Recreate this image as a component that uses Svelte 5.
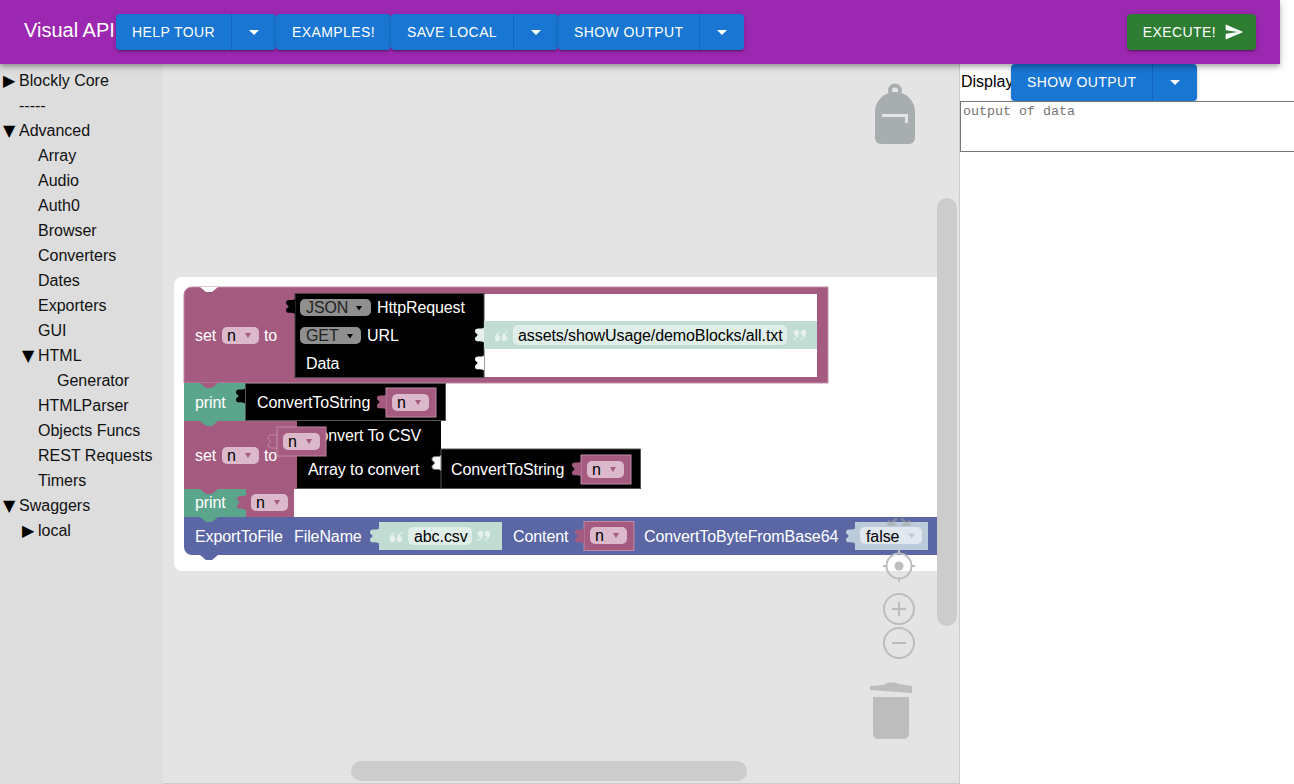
<script>
  const tree = [
    { label: 'Blockly Core', arrow: '▶', depth: 0 },
    { label: '-----', depth: 0 },
    { label: 'Advanced', arrow: '▼', depth: 0 },
    { label: 'Array', depth: 1 },
    { label: 'Audio', depth: 1 },
    { label: 'Auth0', depth: 1 },
    { label: 'Browser', depth: 1 },
    { label: 'Converters', depth: 1 },
    { label: 'Dates', depth: 1 },
    { label: 'Exporters', depth: 1 },
    { label: 'GUI', depth: 1 },
    { label: 'HTML', arrow: '▼', depth: 1 },
    { label: 'Generator', depth: 2 },
    { label: 'HTMLParser', depth: 1 },
    { label: 'Objects Funcs', depth: 1 },
    { label: 'REST Requests', depth: 1 },
    { label: 'Timers', depth: 1 },
    { label: 'Swaggers', arrow: '▼', depth: 0 },
    { label: 'local', arrow: '▶', depth: 1 }
  ];

  const toolbar = [
    { label: 'HELP TOUR', split: true },
    { label: 'EXAMPLES!', split: false },
    { label: 'SAVE LOCAL', split: true },
    { label: 'SHOW OUTPUT', split: true }
  ];

  const PINK = '#a55b80';
  const PINK_FIELD = '#dbb9cb';
  const GREEN = '#5ba58c';
  const STRING = '#c1dcd2';
  const BLUE = '#5b67a5';

  // puzzle tab, drawn leftwards from the block edge
  const tab = (x, y) =>
    `M${x} ${y}C${x - 3} ${y + 2.5} ${x - 9} ${y - 1} ${x - 9} ${y + 4}` +
    `C${x - 9} ${y + 6} ${x - 6.5} ${y + 6} ${x - 6.5} ${y + 7.5}` +
    `C${x - 6.5} ${y + 9} ${x - 9} ${y + 9} ${x - 9} ${y + 11}` +
    `C${x - 9} ${y + 16} ${x - 3} ${y + 12.5} ${x} ${y + 15}z`;

  const tabs = [
    { x: 295, y: 299, fill: '#000' },
    { x: 484, y: 327.5, fill: '#e6f1ed' },
    { x: 484, y: 355.5, fill: '#fff' },
    { x: 245, y: 388.5, fill: '#000' },
    { x: 386, y: 394.5, fill: PINK },
    { x: 441, y: 455.5, fill: '#fff', stroke: '#777' },
    { x: 581, y: 461.5, fill: PINK },
    { x: 246, y: 495, fill: PINK },
    { x: 379, y: 528.5, fill: STRING },
    { x: 584, y: 528.5, fill: PINK },
    { x: 855, y: 528.5, fill: '#bccbd9' }
  ];

  // dropdown fields of the variable blocks
  const varFields = [
    { x: 222, y: 327 },
    { x: 392, y: 394 },
    { x: 222, y: 447 },
    { x: 587, y: 461 },
    { x: 251, y: 494 },
    { x: 590, y: 527 },
    { x: 283, y: 433 }
  ];

  const pinkBlocks = [
    { x: 386, y: 388 },
    { x: 581, y: 455 },
    { x: 584, y: 521.5 }
  ];

  const labels = [
    { x: 195, y: 341, t: 'set' },
    { x: 264, y: 341, t: 'to' },
    { x: 377, y: 313, t: 'HttpRequest' },
    { x: 367, y: 341, t: 'URL' },
    { x: 306, y: 369, t: 'Data' },
    { x: 195, y: 408, t: 'print' },
    { x: 257, y: 408, t: 'ConvertToString' },
    { x: 195, y: 461, t: 'set' },
    { x: 264, y: 461, t: 'to' },
    { x: 308, y: 441, t: 'Convert To CSV' },
    { x: 308, y: 475, t: 'Array to convert' },
    { x: 451, y: 475, t: 'ConvertToString' },
    { x: 195, y: 508, t: 'print' },
    { x: 195, y: 542, t: 'ExportToFile' },
    { x: 294, y: 542, t: 'FileName' },
    { x: 513, y: 542, t: 'Content' },
    { x: 644, y: 542, t: 'ConvertToByteFromBase64' }
  ];

  const openQuotes = [{ x: 495, y: 331 }, { x: 390, y: 532 }];
  const closeQuotes = [{ x: 806, y: 340 }, { x: 490, y: 541 }];
  const mark = 'M5.500 0C2 1.500 0 3.500 0 6.200A2.800 2.800 0 1 0 5 6 2.600 2.600 0 0 0 2.500 4C3 2.800 4.500 1.500 5.800 .8Z';
</script>

<header class="bar">
  <div class="title">Visual API</div>
  {#each toolbar as item}
    <div class="group">
      <button class="btn" class:main={item.split}>{item.label}</button>
      {#if item.split}
        <button class="btn caret" aria-label="more">
          <svg viewBox="0 0 24 24" width="24" height="24"><path d="M7 10l5 5 5-5z" fill="currentColor" /></svg>
        </button>
      {/if}
    </div>
  {/each}
  <button class="btn execute">
    EXECUTE!
    <svg viewBox="0 0 24 24" width="20" height="20"><path d="M2.01 21L23 12 2.01 3 2 10l15 2-15 2z" fill="currentColor" /></svg>
  </button>
</header>

<main class="page">
  <nav class="tree">
    {#each tree as row}
      <div class="row depth{row.depth}">
        {#if row.arrow}<span class="arrow">{row.arrow}</span>{/if}
        <span>{row.label}</span>
      </div>
    {/each}
  </nav>

  <section class="canvas">
    <svg class="workspace" viewBox="163 64 796 719" width="796" height="719">
      <!-- backpack -->
      <g>
        <circle cx="895" cy="90.500" r="5" fill="none" stroke="#a8adaf" stroke-width="4" />
        <path d="M875 112a20 20 0 0 1 40 0v26a6 6 0 0 1 -6 6h-28a6 6 0 0 1 -6 -6z" fill="#a8adaf" />
        <path d="M882 114h26v9h-3v-6h-23z" fill="#e4e4e4" />
      </g>

      <!-- top zoom corners sit under the blocks -->
      <g fill="#bdbdbd">
        <path d="M887 502h10l-3 3 4 4-3 3-4-4-3 3z" />
        <path d="M911 502h-10l3 3-4 4 3 3 4-4 3 3z" />
      </g>

      <path d="M182 277H938V571H182a8 8 0 0 1 -8 -8V285a8 8 0 0 1 8 -8z" fill="#fff" />

      <!-- set n to HttpRequest -->
      <path d="M192 287H828V383H184V295a8 8 0 0 1 8 -8z" fill={PINK} stroke="#c08aa5" stroke-width="1" />
      <path d="M200 287l6 5h6l6 -5z" fill="#fff" />
      <rect x="295" y="294" width="522" height="83" fill="#fff" />
      <rect x="295" y="293.5" width="189" height="84" fill="#000" stroke="#444" stroke-width="1" />
      <rect x="484" y="321" width="333" height="28" fill={STRING} />
      <rect x="513" y="325" width="274" height="20" rx="5" fill="#e0eee9" />
      <rect x="300" y="299" width="71" height="17" rx="5" fill="#8f8f8f" />
      <rect x="300" y="327" width="61" height="17" rx="5" fill="#8f8f8f" />

      <!-- print ConvertToString -->
      <rect x="184" y="383" width="62" height="38" fill={GREEN} />
      <path d="M200 383l6 5h6l6 -5z" fill={PINK} />
      <rect x="245.5" y="383.5" width="200" height="37" fill="#000" stroke="#555" stroke-width="1" />

      <!-- set n to Convert To CSV -->
      <rect x="184" y="421" width="113" height="68" fill={PINK} />
      <path d="M200 421l6 5h6l6 -5z" fill={GREEN} />
      <path d="M297 421H441V449H641V489H297z" fill="#000" />
      <path d="M441 449V489M441 449H640.5V488.500H297" fill="none" stroke="#555" stroke-width="1" />

      <!-- print n -->
      <rect x="184" y="489" width="62" height="28" fill={GREEN} />
      <path d="M200 489l6 5h6l6 -5z" fill={PINK} />
      <rect x="246" y="489" width="48" height="28" fill={PINK} />

      <!-- ExportToFile -->
      <path d="M184 517H938V555H218l-6 5h-6l-6 -5h-8a8 8 0 0 1 -8 -8z" fill={BLUE} />
      <path d="M200 517l6 5h6l6 -5z" fill={GREEN} />
      <rect x="379" y="522" width="123" height="28" fill={STRING} />
      <rect x="408" y="527" width="64" height="18" rx="5" fill="#e0eee9" />
      <rect x="855" y="522" width="73" height="28" fill="#bccbd9" />

      {#each pinkBlocks as b}
        <rect x={b.x} y={b.y} width="50" height="29" fill={PINK} stroke="#c08aa5" stroke-width="1" />
      {/each}

      {#each tabs as t}
        <path d={tab(t.x, t.y)} fill={t.fill} stroke={t.stroke ?? 'none'} />
      {/each}

      {#each labels as l}
        <text x={l.x} y={l.y} class="label">{l.t}</text>
      {/each}

      <!-- dragged variable block lies over the others -->
      <path d={tab(277, 434)} fill={PINK} stroke="#c08aa5" />
      <rect x="277" y="427" width="49" height="29" fill={PINK} stroke="#c08aa5" stroke-width="1" />

      <!-- zoom corners show through the last block -->
      <g fill="#a5a5a5" opacity="0.55">
        <path d="M887 526h10l-3 -3 4 -4 -3 -1 -4 4 -3 -3z" />
        <path d="M911 526h-10l3 -3 -4 -4 3 -1 4 4 3 -3z" />
      </g>

      <rect x="860" y="527" width="62" height="17" rx="5" fill="#e0e7ee" />

      {#each varFields as f}
        <rect x={f.x} y={f.y} width="37" height="17" rx="5" fill={PINK_FIELD} />
        <text x={f.x + 5} y={f.y + 14} class="value">n</text>
        <path d="M{f.x + 23} {f.y + 6}h6l-3 5z" fill={PINK} />
      {/each}

      <text x="306" y="313" class="value dim">JSON</text>
      <path d="M356 306h6l-3 4.500z" fill="#000" />
      <text x="306" y="341" class="value dim">GET</text>
      <path d="M347 334h6l-3 4.500z" fill="#000" />
      <text x="518" y="341" class="value">assets/showUsage/demoBlocks/all.txt</text>
      <text x="414" y="542" class="value">abc.csv</text>
      <text x="866" y="542" class="value">false</text>
      <path d="M908 533.500h7l-3.500 5z" fill="#bccbd9" />

      {#each openQuotes as q}
        <g transform="translate({q.x} {q.y})" fill="#e6f1ed">
          <path d={mark} />
          <path d={mark} transform="translate(7 0)" />
        </g>
      {/each}
      {#each closeQuotes as q}
        <g transform="translate({q.x} {q.y}) rotate(180)" fill="#e6f1ed">
          <path d={mark} />
          <path d={mark} transform="translate(7 0)" />
        </g>
      {/each}

      <!-- zoom controls -->
      <g fill="none" stroke="#bdbdbd" stroke-width="2">
        <circle cx="899" cy="566" r="12.500" />
        <path d="M899 550v4M899 578v4M883 566h4M911 566h4" />
        <circle cx="899" cy="609" r="15" />
        <path d="M892 609h14M899 602v14" />
        <circle cx="899" cy="643" r="15" />
        <path d="M892 643h14" />
      </g>
      <circle cx="899" cy="566" r="4.500" fill="#bdbdbd" />

      <!-- trash -->
      <g fill="#bdbdbd">
        <path d="M870 686l14 -1c2 -3 12 -3 15 -1l13 2 0 7l -42 -3z" />
        <path d="M873 697h36v37a5 5 0 0 1 -5 5h-26a5 5 0 0 1 -5 -5z" />
      </g>

      <!-- scrollbars -->
      <rect x="937" y="198" width="20" height="428" rx="10" fill="#ccc" />
      <rect x="351" y="761" width="396" height="20" rx="10" fill="#ccc" />
    </svg>
  </section>

  <aside class="output">
    <div class="display">
      <span class="display-label">Display</span>
      <div class="group">
        <button class="btn main">SHOW OUTPUT</button>
        <button class="btn caret" aria-label="more">
          <svg viewBox="0 0 24 24" width="24" height="24"><path d="M7 10l5 5 5-5z" fill="currentColor" /></svg>
        </button>
      </div>
    </div>
    <textarea placeholder="output of data"></textarea>
  </aside>
</main>

<style>
  :global(body) {
    margin: 0;
    overflow: hidden;
    background: #fff;
    font-family: "Liberation Sans", Arial, sans-serif;
  }
  .bar {
    position: relative;
    z-index: 2;
    box-sizing: border-box;
    width: 1280px;
    height: 64px;
    display: flex;
    align-items: center;
    padding: 0 24px;
    background: #9c27b0;
    color: #fff;
    box-shadow: 0 2px 4px -1px rgba(0,0,0,.2), 0 4px 5px rgba(0,0,0,.14), 0 1px 10px rgba(0,0,0,.12);
  }
  .title {
    width: 92px;
    font-size: 20px;
    white-space: nowrap;
    margin-top: -4px;
  }
  .group {
    display: flex;
    border-radius: 4px;
    box-shadow: 0 3px 1px -2px rgba(0,0,0,.2), 0 2px 2px rgba(0,0,0,.14), 0 1px 5px rgba(0,0,0,.12);
  }
  .btn {
    display: flex;
    align-items: center;
    height: 36.5px;
    padding: 0 16px;
    border: 0;
    border-radius: 4px;
    background: #1976d2;
    color: #fff;
    font: 14px "Liberation Sans", Arial, sans-serif;
    letter-spacing: .4px;
    white-space: nowrap;
  }
  .group .main {
    border-radius: 4px 0 0 4px;
    border-right: 1px solid #1565c0;
  }
  .group .caret {
    width: 44px;
    padding: 0;
    justify-content: center;
    border-radius: 0 4px 4px 0;
  }
  .execute {
    margin-left: auto;
    gap: 8px;
    padding: 0 12px 0 16px;
    background: #2e7d32;
    box-shadow: 0 3px 1px -2px rgba(0,0,0,.2), 0 2px 2px rgba(0,0,0,.14), 0 1px 5px rgba(0,0,0,.12);
  }
  .page {
    display: grid;
    grid-template-columns: 163px 797px 334px;
    height: 720px;
  }
  .tree {
    background: #ddd;
    padding-top: 4px;
    font-size: 16px;
    color: #111;
  }
  .row {
    position: relative;
    height: 25px;
    line-height: 25px;
    white-space: nowrap;
  }
  .depth0 { padding-left: 19px; }
  .depth1 { padding-left: 38px; }
  .depth2 { padding-left: 57px; }
  .arrow {
    position: absolute;
    margin-left: -16px;
    font-family: "DejaVu Sans", sans-serif;
    font-size: 16px;
    color: #000;
  }
  .canvas {
    box-sizing: border-box;
    background: #e4e4e4;
    border-right: 1px solid #ccc;
    border-bottom: 1px solid #ccc;
  }
  .workspace {
    display: block;
  }
  .label {
    fill: #fff;
    letter-spacing: -.1px;
    font: 16px "Liberation Sans", Arial, sans-serif;
  }
  .value {
    fill: #000;
    letter-spacing: -.09px;
    font: 16px "Liberation Sans", Arial, sans-serif;
  }
  .dim {
    fill: #222;
  }
  .output {
    display: flex;
    flex-direction: column;
  }
  .display {
    display: flex;
    align-items: center;
    padding-left: 1px;
    font-size: 16px;
    color: #000;
  }
  .display-label {
    width: 50px;
  }
  .output textarea {
    box-sizing: border-box;
    display: block;
    width: 100%;
    height: 51px;
    margin: 0;
    padding: 2px;
    border: 1px solid #767676;
    border-right: 0;
    border-radius: 0;
    font: 13.33px "Liberation Mono", monospace;
    resize: none;
  }
</style>
